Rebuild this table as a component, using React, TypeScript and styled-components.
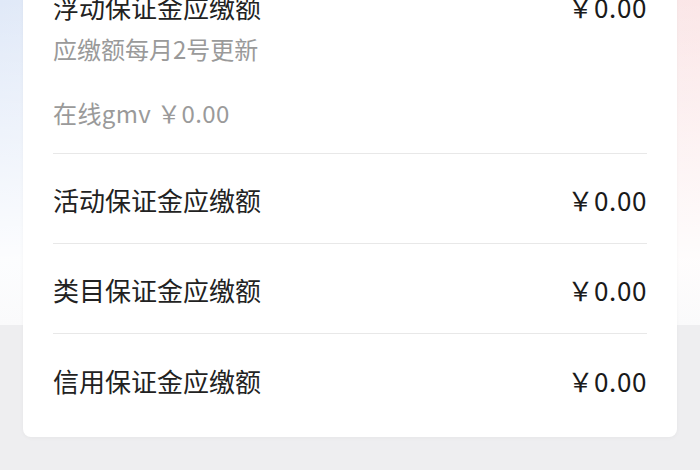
import styled, { createGlobalStyle } from "styled-components";

const GlobalStyle = createGlobalStyle`
  html, body {
    margin: 0;
    padding: 0;
  }
  body {
    font-family: "Noto Sans CJK SC", "Noto Sans", sans-serif;
    background: #eeeef0;
  }
`;

const Page = styled.div`
  width: 700px;
  height: 470px;
  overflow: hidden;
  padding: 0 23px;
  box-sizing: border-box;
  background:
    linear-gradient(to bottom, rgba(255, 255, 255, 0) 0, rgba(255, 255, 255, 0.9) 260px, #fafafb 325px) top / 100% 325px no-repeat,
    linear-gradient(to right, #e0e9f8 0%, #f3f3f8 50%, #fbe6e7 100%) top / 100% 325px no-repeat,
    #eeeef0;
`;

const Card = styled.div`
  margin-top: -42px;
  background: #fff;
  border-radius: 8px;
  box-shadow: 0 1px 4px rgba(0, 0, 0, 0.04);
  padding: 0 30px 13px 30px;
`;

const FloatSection = styled.div`
  padding: 30px 0 23px;
  border-bottom: 1px solid #e8e8e8;
`;

const Line = styled.div<{ $muted?: boolean; $gap?: number }>`
  display: flex;
  justify-content: space-between;
  align-items: center;
  height: 36px;
  margin-top: ${p => p.$gap ?? 0}px;
  font-size: ${p => (p.$muted ? 24 : 26)}px;
  color: ${p => (p.$muted ? "#9a9a9a" : "#222")};
`;

const Row = styled.div<{ $last?: boolean }>`
  display: flex;
  justify-content: space-between;
  align-items: center;
  height: 90px;
  padding-top: 2px;
  box-sizing: border-box;
  font-size: 26px;
  color: #222;
  border-bottom: ${p => (p.$last ? "none" : "1px solid #e8e8e8")};
`;

const Amount = styled.span`
  font-size: 26px;
  letter-spacing: 0.6px;
  color: #1a1a1a;
`;

const Gmv = styled.span`
  letter-spacing: 0.4px;
`;

const rows = ["活动保证金应缴额", "类目保证金应缴额", "信用保证金应缴额"];

const App = () => {
  return (
    <>
      <GlobalStyle />
      <Page>
        <Card>
          <FloatSection>
            <Line>
              <span>浮动保证金应缴额</span>
              <Amount>￥0.00</Amount>
            </Line>
            <Line $muted $gap={6}>
              <span>应缴额每月2号更新</span>
            </Line>
            <Line $muted $gap={28}>
              <Gmv>在线gmv ￥0.00</Gmv>
            </Line>
          </FloatSection>
          {rows.map((label, i) => (
            <Row key={label} $last={i === rows.length - 1}>
              <span>{label}</span>
              <Amount>￥0.00</Amount>
            </Row>
          ))}
        </Card>
      </Page>
    </>
  );
};

export default App;
